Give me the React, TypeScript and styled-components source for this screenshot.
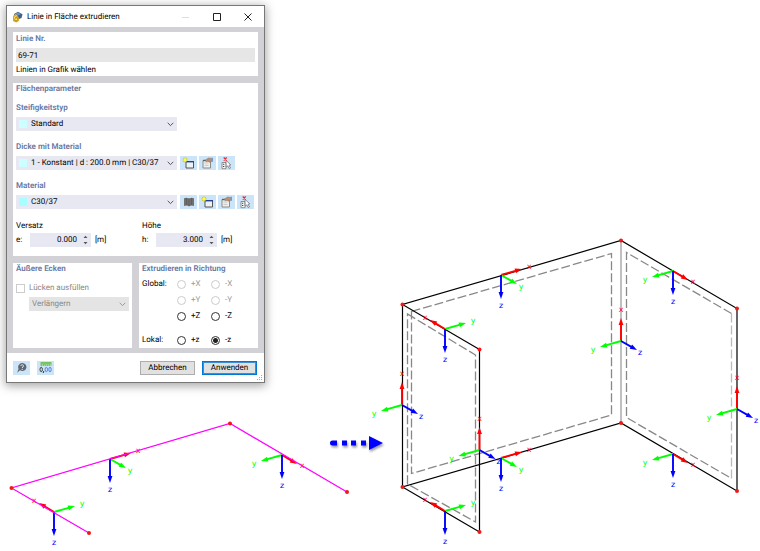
import React from 'react';
import styled, { createGlobalStyle } from 'styled-components';

const Global = createGlobalStyle`
  * { box-sizing: border-box; }
  body { margin: 0; background: #fff; }
  body, button, input, select {
    font-family: Roboto, "Noto Sans", sans-serif;
    font-size: 8px;
    line-height: 12px;
    color: #000;
    text-rendering: geometricPrecision;
  }
`;

const Page = styled.main`
  display: grid;
  grid-template-columns: 390px minmax(0, 1fr);
  align-items: end;
  overflow: hidden;
`;

const LeftColumn = styled.div`
  display: flex;
  flex-direction: column;
`;

const Dialog = styled.section`
  width: 259px;
  margin: 5px 0 7px 6px;
  border: 1px solid #777;
  background: #fff;
  box-shadow: 0 2px 9px 1px rgba(0, 0, 0, 0.35);
`;

const TitleBar = styled.header`
  display: flex;
  align-items: center;
  height: 21px;
  padding: 0 1px 0 5px;
`;

const Title = styled.h1`
  flex: 1;
  margin: 0 0 0 4px;
  font-size: 8px;
  font-weight: 400;
`;

const WindowButton = styled.button<{ $faint?: boolean }>`
  display: flex;
  align-items: center;
  justify-content: center;
  width: 31px;
  height: 19px;
  padding: 0;
  border: 0;
  background: none;
  color: ${p => (p.$faint ? '#ddd' : '#222')};
`;

const Body = styled.div`
  display: flex;
  flex-direction: column;
  gap: 7px;
  padding: 5px 6px;
  background: #d1d1d6;
`;

const Split = styled.div`
  display: grid;
  grid-template-columns: 1fr 1fr;
  gap: 7px;
`;

const Panel = styled.section<{ $pad?: string }>`
  padding: ${p => p.$pad ?? '0 3px'};
  background: #fff;
`;

const Heading = styled.h2`
  margin: 0;
  font-size: 8px;
  line-height: 12px;
  font-weight: 600;
  color: #66779f;
`;

const FieldLabel = styled.label`
  display: block;
  margin-top: 7px;
  padding-bottom: 3px;
  font-weight: 600;
  color: #66779f;
`;

const LineInput = styled.input`
  display: block;
  width: 100%;
  height: 14px;
  margin: 3px 0 2px;
  padding: 0 2px;
  border: 0;
  background: #e6e6e6;
`;

const Plain = styled.p`
  margin: 0;
`;

const Row = styled.div`
  display: flex;
  gap: 2px;
  margin-bottom: 10px;
`;

const SelectBox = styled.div<{ $off?: boolean; $width?: string }>`
  display: flex;
  align-items: center;
  width: ${p => p.$width ?? '161px'};
  height: 14px;
  margin-right: 1px;
  padding: 0 3px;
  background: ${p => (p.$off ? '#e4e4e4' : '#e8e8f3')};
  color: ${p => (p.$off ? '#999' : '#555')};
  select {
    flex: 1;
    min-width: 0;
    padding: 0;
    border: 0;
    appearance: none;
    background: none;
    color: ${p => (p.$off ? '#888' : '#000')};
    opacity: 1;
  }
`;

const Swatch = styled.span<{ $color: string }>`
  width: 8px;
  height: 8px;
  margin-right: 4px;
  background: ${p => p.$color};
`;

const Tool = styled.button`
  display: flex;
  align-items: center;
  justify-content: center;
  width: 17px;
  height: 14px;
  padding: 0;
  border: 0;
  background: #cce4f7;
`;

const Pair = styled.div`
  display: grid;
  grid-template-columns: 1fr 1fr;
  gap: 13px;
  margin-top: 11px;
`;

const Measure = styled.div`
  display: grid;
  grid-template-columns: 14px 61px auto;
  align-items: center;
  row-gap: 1px;
`;

const MeasureTitle = styled.span`
  grid-column: 1 / -1;
`;

const Spin = styled.div`
  display: flex;
  align-items: center;
  height: 14px;
  padding-right: 3px;
  background: #e8e8f3;
  input {
    flex: 1;
    min-width: 0;
    padding: 0 6px 0 0;
    border: 0;
    background: none;
    text-align: right;
  }
`;

const Unit = styled.span`
  padding-left: 4px;
`;

const Check = styled.label`
  display: flex;
  align-items: center;
  gap: 4px;
  margin-top: 7px;
  color: #888;
  input {
    width: 9px;
    height: 9px;
    margin: 0;
    border: 1px solid #ccc;
    appearance: none;
    background: #fff;
  }
`;

const Indent = styled.div`
  padding: 3px 0 0 13px;
`;

const Directions = styled.div`
  display: grid;
  grid-template-columns: 35px 34px 1fr;
  grid-template-rows: 16px 16px 16px 8px 16px;
  align-items: center;
  margin-top: 1px;
`;

const Radio = styled.label<{ $off?: boolean }>`
  display: flex;
  align-items: center;
  gap: 5px;
  color: ${p => (p.$off ? '#999' : '#000')};
  input {
    width: 9px;
    height: 9px;
    margin: 0;
    border: 1px solid ${p => (p.$off ? '#ccc' : '#333')};
    border-radius: 50%;
    appearance: none;
    background: #fff;
  }
  input:checked {
    background: radial-gradient(circle, #222 0 2px, #fff 3px);
  }
`;

const Gap = styled.span`
  grid-column: 1 / -1;
`;

const Footer = styled.footer`
  position: relative;
  display: flex;
  align-items: center;
  gap: 7px;
  height: 29px;
  padding: 0 7px 0 6px;
`;

const Command = styled.button<{ $primary?: boolean }>`
  width: 55px;
  height: 14px;
  padding: 0;
  border: 1px solid ${p => (p.$primary ? '#0078d7' : '#adadad')};
  box-shadow: ${p => (p.$primary ? 'inset 0 0 0 1px #3a8fd8' : 'none')};
  background: #e1e1e1;
  line-height: 11px;
`;

const Spacer = styled.span`
  flex: 1;
`;

const Grip = styled.svg`
  position: absolute;
  right: 1px;
  bottom: 1px;
`;

const LineSketch = styled.svg`
  display: block;
  width: 100%;
  height: auto;
`;

const BoxSketch = styled.svg`
  display: block;
  width: 100%;
  height: auto;
  overflow: visible;
`;

const AxisName = styled.text`
  font-family: "DejaVu Sans", sans-serif;
  font-size: 8px;
  text-anchor: middle;
`;

const Chevron = () => (
  <svg width="7" height="5" viewBox="0 0 7 5" fill="none" stroke="currentColor">
    <path d="M.7 .8 3.5 3.6 6.3 .8" />
  </svg>
);

const SpinArrows = () => (
  <svg width="5" height="10" viewBox="0 0 5 10" fill="#555">
    <path d="M.5 3 2.5 .8 4.5 3zM.5 7 2.5 9.2 4.5 7z" />
  </svg>
);

const AppIcon = () => (
  <svg width="11" height="12" viewBox="0 0 11 12">
    <path d="M2 3 6 .8 10.5 3.2 9.5 7 7 8 2 5z" fill="#3f5f88" />
    <path d="M3 2.7 6 1.2 9 3 6 4.5z" fill="#6d91b7" />
    <path d="M1 5.2 3.2 2.8 5.2 4.2 7 6.8 6.8 10 4.3 11.5 1 10z" fill="#d9a522" />
    <path d="M4.8 4.6C3 4.8 2.3 6.5 2.5 8.5" stroke="#ffe684" fill="none" />
    <circle cx="4.2" cy="8.3" r="1.5" fill="#ffe05a" stroke="#9a7010" strokeWidth=".6" />
  </svg>
);

const NewIcon = () => (
  <svg width="13" height="12" viewBox="0 0 13 12">
    <path d="M4 4.5h7.5v6.5H4z" fill="#eef2f5" stroke="#555" />
    <path d="M4 4.7h8" stroke="#27418a" strokeWidth="1.4" />
    <path d="M3 .4v5M.5 2.9h5M1.2 1.1l3.6 3.6M4.8 1.1 1.2 4.7" stroke="#c2b900" strokeWidth=".9" />
    <circle cx="3" cy="2.9" r="1.6" fill="#ffff38" />
  </svg>
);

const EditIcon = () => (
  <svg width="13" height="12" viewBox="0 0 13 12">
    <path d="M2 3.5h7.5V11H2z" fill="#f0f0ee" stroke="#8b8b8b" />
    <path d="M2 3.5h6" stroke="#59616a" strokeWidth="1.4" />
    <path d="M3.5 6h4M3.5 8.3h4" stroke="#c5c5c5" />
    <path d="M4.2 3.2 7.5 1l3.2.4v3.1L8.3 5.2 7 4.2 5 4.6z" fill="#b98f73" stroke="#79604f" strokeWidth=".4" />
    <path d="M10.5.8H12v4h-1.5z" fill="#6b9dce" />
  </svg>
);

const PickIcon = () => (
  <svg width="13" height="13" viewBox="0 0 13 13">
    <path d="M2 5.5h4v6.2H2z" fill="#f7f7f7" stroke="#777" strokeWidth=".8" />
    <path d="M3 7.3h1.3M3 9.5h1.3" stroke="#444" />
    <path d="m6 3.3 4.8 4.6-1.8.3 1.5 2.8-1.2.7-1.5-2.8L6.2 10z" fill="#fff" stroke="#666" strokeWidth=".7" />
    <path d="m3.7.5 3 3M6.7.5l-3 3" stroke="#e22835" strokeWidth="1.2" />
  </svg>
);

const BookIcon = () => (
  <svg width="12" height="10" viewBox="0 0 12 10">
    <path d="M1 1.2 3.5.7 6 1.4 8.5.7l2.5.5v7.7l-2.5-.5-2.5.8-2.5-.8-2.5.5z" fill="#707070" />
    <path d="M6 1.4v7.8M3.5 1v7M8.5 1v7" stroke="#4c4c4c" strokeWidth=".5" />
  </svg>
);

const HelpIcon = () => (
  <svg width="11" height="12" viewBox="0 0 11 12">
    <path d="M6.2 1a4 4 0 1 1-2.2 7.2L1.1 10.7l1.5-3.9A4 4 0 0 1 6.2 1z" fill="#606770" />
    <path d="M4.8 3.9C5 2.3 7.8 2.4 7.5 4.1 7.3 5 6.2 5 6.2 6.1M6.2 7v1" stroke="#e3edf6" fill="none" />
  </svg>
);

const UnitsIcon = () => (
  <svg width="13" height="13" viewBox="0 0 13 13">
    <path d="M1.5 1h11v4h-11z" fill="#76c46a" />
    <path d="M3.5 3v2M5.5 3.5V5M7.5 3v2M9.5 3.5V5M11.5 3v2" stroke="#c4e8bd" strokeWidth=".6" />
    <ellipse cx="2.2" cy="8.5" rx="1.2" ry="2.2" fill="none" stroke="#333" strokeWidth=".9" />
    <path d="m4.8 10-.6 2" stroke="#333" />
    <ellipse cx="7.3" cy="8.5" rx="1.2" ry="2.2" fill="none" stroke="#447ce0" strokeWidth=".9" />
    <ellipse cx="11" cy="8.5" rx="1.2" ry="2.2" fill="none" stroke="#447ce0" strokeWidth=".9" />
  </svg>
);

type Vec = [number, number];
type AxisDef = { tip: Vec; text: Vec };
type Triad = { x: AxisDef; y: AxisDef; z: AxisDef };

const down: AxisDef = { tip: [0, 24], text: [0, 31] };

/* Local axis systems for each direction an edge can run in. */
const triads: Record<'back' | 'left' | 'right' | 'upright', Triad> = {
  back: { x: { tip: [21, -6], text: [28, -8] }, y: { tip: [16, 9], text: [20, 12] }, z: down },
  left: { x: { tip: [-15, -9], text: [-20, -11] }, y: { tip: [21, -6], text: [28, -8] }, z: down },
  right: { x: { tip: [15, 9], text: [20, 11] }, y: { tip: [-21, 6], text: [-28, 9] }, z: down },
  upright: { x: { tip: [0, -23], text: [0, -31] }, y: { tip: [-21, 6], text: [-28, 9] }, z: { tip: [16, 9], text: [19, 12] } },
};

const axisColors = { x: '#ff0000', y: '#00ff00', z: '#0000ff' };

function Axes({ at, kind }: { at: Vec; kind: keyof typeof triads }) {
  const names = ['x', 'y', 'z'] as const;
  return (
    <g transform={`translate(${at[0]} ${at[1]})`}>
      {names.map(n => {
        const { tip, text } = triads[kind][n];
        const len = Math.hypot(tip[0], tip[1]);
        const angle = (Math.atan2(tip[1], tip[0]) * 180) / Math.PI;
        return (
          <g key={n} fill={axisColors[n]}>
            <g transform={`rotate(${angle})`}>
              <path d={`M0 0H${len - 5}`} stroke={axisColors[n]} strokeWidth="1.9" />
              <path d={`M${len - 7} -2.4L${len} 0L${len - 7} 2.4z`} />
            </g>
            <AxisName x={text[0]} y={text[1] + 2}>{n}</AxisName>
          </g>
        );
      })}
    </g>
  );
}

function Nodes({ points }: { points: Vec[] }) {
  return (
    <g fill="#f01818">
      {points.map(([x, y]) => <circle key={`${x}-${y}`} cx={x} cy={y} r="2" />)}
    </g>
  );
}

function ExtrudeDialog() {
  return (
    <Dialog aria-labelledby="dialog-title">
      <TitleBar>
        <AppIcon />
        <Title id="dialog-title">Linie in Fläche extrudieren</Title>
        <WindowButton $faint aria-label="Minimieren">
          <svg width="8" height="8"><path d="M0 4.5h7" stroke="currentColor" /></svg>
        </WindowButton>
        <WindowButton aria-label="Maximieren">
          <svg width="8" height="8"><path d="M.5 .5h7v7h-7z" fill="none" stroke="currentColor" /></svg>
        </WindowButton>
        <WindowButton aria-label="Schließen">
          <svg width="8" height="8"><path d="m.5 .5 7 7M7.5 .5l-7 7" stroke="currentColor" /></svg>
        </WindowButton>
      </TitleBar>
      <Body>
        <Panel $pad="1px 3px 0">
          <Heading as="label" htmlFor="lines">Linie Nr.</Heading>
          <LineInput id="lines" defaultValue="69-71" />
          <Plain>Linien in Grafik wählen</Plain>
        </Panel>
        <Panel $pad="0 3px 9px">
          <Heading>Flächenparameter</Heading>
          <FieldLabel htmlFor="stiffness">Steifigkeitstyp</FieldLabel>
          <Row>
            <SelectBox>
              <Swatch $color="#ccffff" />
              <select id="stiffness"><option>Standard</option></select>
              <Chevron />
            </SelectBox>
          </Row>
          <FieldLabel htmlFor="thickness">Dicke mit Material</FieldLabel>
          <Row>
            <SelectBox>
              <Swatch $color="#ccffff" />
              <select id="thickness"><option>1 - Konstant | d : 200.0 mm | C30/37</option></select>
              <Chevron />
            </SelectBox>
            <Tool aria-label="Neue Dicke"><NewIcon /></Tool>
            <Tool aria-label="Dicke bearbeiten"><EditIcon /></Tool>
            <Tool aria-label="Dicke auswählen"><PickIcon /></Tool>
          </Row>
          <FieldLabel htmlFor="material">Material</FieldLabel>
          <Row>
            <SelectBox>
              <Swatch $color="#a6ffff" />
              <select id="material"><option>C30/37</option></select>
              <Chevron />
            </SelectBox>
            <Tool aria-label="Bibliothek"><BookIcon /></Tool>
            <Tool aria-label="Neues Material"><NewIcon /></Tool>
            <Tool aria-label="Material bearbeiten"><EditIcon /></Tool>
            <Tool aria-label="Material auswählen"><PickIcon /></Tool>
          </Row>
          <Pair>
            <Measure>
              <MeasureTitle>Versatz</MeasureTitle>
              <label htmlFor="offset">e:</label>
              <Spin><input id="offset" defaultValue="0.000" /><SpinArrows /></Spin>
              <Unit>[m]</Unit>
            </Measure>
            <Measure>
              <MeasureTitle>Höhe</MeasureTitle>
              <label htmlFor="height">h:</label>
              <Spin><input id="height" defaultValue="3.000" /><SpinArrows /></Spin>
              <Unit>[m]</Unit>
            </Measure>
          </Pair>
        </Panel>
        <Split>
          <Panel>
            <Heading>Äußere Ecken</Heading>
            <Check><input type="checkbox" disabled />Lücken ausfüllen</Check>
            <Indent>
              <SelectBox $off $width="100%">
                <select disabled aria-label="Lücken ausfüllen durch"><option>Verlängern</option></select>
                <Chevron />
              </SelectBox>
            </Indent>
          </Panel>
          <Panel>
            <Heading>Extrudieren in Richtung</Heading>
            <Directions>
              <span>Global:</span>
              <Radio $off><input type="radio" name="dir" disabled />+X</Radio>
              <Radio $off><input type="radio" name="dir" disabled />-X</Radio>
              <span />
              <Radio $off><input type="radio" name="dir" disabled />+Y</Radio>
              <Radio $off><input type="radio" name="dir" disabled />-Y</Radio>
              <span />
              <Radio><input type="radio" name="dir" />+Z</Radio>
              <Radio><input type="radio" name="dir" />-Z</Radio>
              <Gap />
              <span>Lokal:</span>
              <Radio><input type="radio" name="dir" />+z</Radio>
              <Radio><input type="radio" name="dir" defaultChecked />-z</Radio>
            </Directions>
          </Panel>
        </Split>
      </Body>
      <Footer>
        <Tool aria-label="Hilfe"><HelpIcon /></Tool>
        <Tool aria-label="Einheiten"><UnitsIcon /></Tool>
        <Spacer />
        <Command>Abbrechen</Command>
        <Command $primary>Anwenden</Command>
        <Grip width="6" height="6" viewBox="0 0 6 6" fill="#aaa">
          <path d="M4 0h1v1H4zM2 2h1v1H2zM4 2h1v1H4zM0 4h1v1H0zM2 4h1v1H2zM4 4h1v1H4z" />
        </Grip>
      </Footer>
    </Dialog>
  );
}

export default function App() {
  return (
    <>
      <Global />
      <Page>
        <LeftColumn>
          <ExtrudeDialog />
          <LineSketch viewBox="0 390 390 161" role="img" aria-label="Linienzug">
            <defs>
              <filter id="soft" x="-20%" y="-20%" width="140%" height="170%">
                <feDropShadow dx="1" dy="2" stdDeviation="1" floodOpacity=".4" />
              </filter>
            </defs>
            <Axes at={[110, 459]} kind="back" />
            <Axes at={[54, 512]} kind="left" />
            <Axes at={[282, 455]} kind="right" />
            <path d="M89 533 11.5 488 230 423.5 347 492" fill="none" stroke="#ff00ff" strokeWidth="1.2" />
            <Nodes points={[[89, 533], [11.5, 488], [230, 423.5], [347, 492]]} />
            <g fill="#0000ff" filter="url(#soft)">
              <path d="M332.5 440.5H337v5h-4.5a2.5 2.5 0 0 1 0-5zM342 440.5h5v5h-5zM351 440.5h5v5h-5zM361 440.5h5v5h-5zM369 436l14 7-14 7z" />
            </g>
          </LineSketch>
        </LeftColumn>
        <BoxSketch viewBox="390 230 370 321" role="img" aria-label="Extrudierte Flächen">
          <path d="M621 240.5V423" stroke="#aaa" strokeWidth="1.5" />
          <g fill="none" stroke="#888" strokeWidth="1.3" strokeDasharray="9 3">
            <path d="M411.5 311.5 611.5 253.5V415L411.5 473.5z" />
            <path d="M407.5 314 475.5 355V522L407.5 484z" />
            <path d="M731.5 313.5 626.5 252.5V417.5L731.5 478.5" />
            <path d="M731.5 313.5V478.5" stroke="#bbb" />
          </g>
          <g fill="none" stroke="#000" strokeWidth="1.2">
            <path d="M479.5 349.5 402.5 304.5 621 240.5 737 308.5V491L621 423 402.5 487 479.5 532z" />
            <path d="M402.5 304.5V487" />
          </g>
          <Axes at={[501, 275]} kind="back" />
          <Axes at={[445, 329]} kind="left" />
          <Axes at={[673, 271]} kind="right" />
          <Axes at={[621, 341]} kind="upright" />
          <Axes at={[402, 405]} kind="upright" />
          <Axes at={[479.5, 450]} kind="upright" />
          <Axes at={[501, 458]} kind="back" />
          <Axes at={[445, 511]} kind="left" />
          <Axes at={[673, 454]} kind="right" />
          <Axes at={[737, 409]} kind="upright" />
          <Nodes points={[[402.5, 304.5], [621, 240.5], [737, 308.5], [479.5, 349.5], [402.5, 487], [621, 423], [737, 491], [479.5, 532]]} />
        </BoxSketch>
      </Page>
    </>
  );
}
